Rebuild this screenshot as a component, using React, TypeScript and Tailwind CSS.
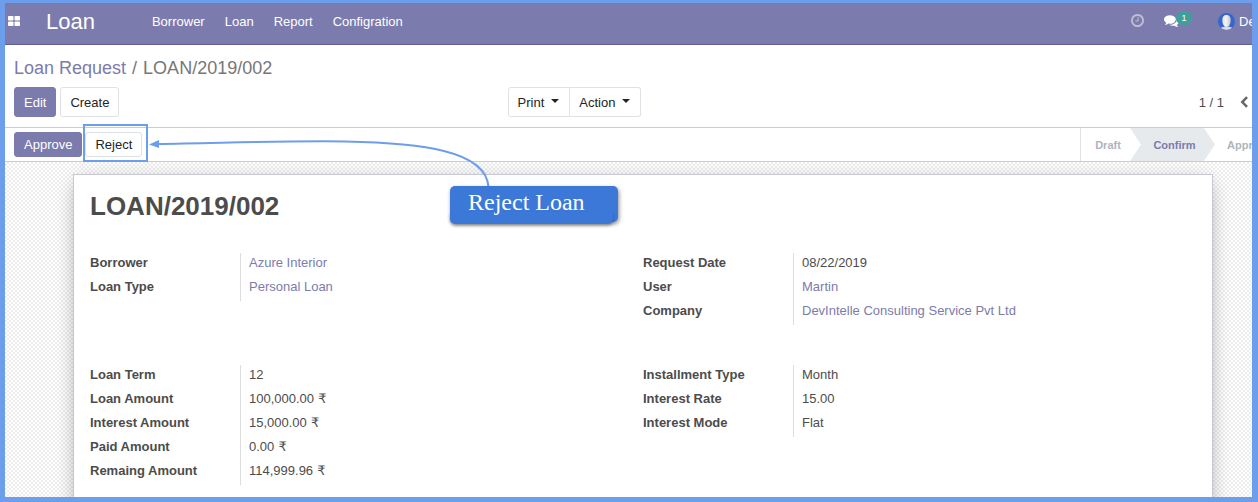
import React from "react";

type Field = { label: string; value: string; link?: boolean; currency?: boolean };

const partyFields: Field[] = [
  { label: "Borrower", value: "Azure Interior", link: true },
  { label: "Loan Type", value: "Personal Loan", link: true },
];
const requestFields: Field[] = [
  { label: "Request Date", value: "08/22/2019" },
  { label: "User", value: "Martin", link: true },
  { label: "Company", value: "DevIntelle Consulting Service Pvt Ltd", link: true },
];
const amountFields: Field[] = [
  { label: "Loan Term", value: "12" },
  { label: "Loan Amount", value: "100,000.00", currency: true },
  { label: "Interest Amount", value: "15,000.00", currency: true },
  { label: "Paid Amount", value: "0.00", currency: true },
  { label: "Remaing Amount", value: "114,999.96", currency: true },
];
const interestFields: Field[] = [
  { label: "Installment Type", value: "Month" },
  { label: "Interest Rate", value: "15.00" },
  { label: "Interest Mode", value: "Flat" },
];

function FieldGroup({ fields }: { fields: Field[] }) {
  return (
    <dl>
      {fields.map((f) => (
        <div key={f.label} className="flex h-6 leading-5">
          <dt className="w-[150px] shrink-0 font-bold">{f.label}</dt>
          <dd className="border-l border-[#dddddd] pl-2">
            {f.link ? (
              <a href="#" className="text-[#7c7bad]">{f.value}</a>
            ) : (
              f.value
            )}
            {f.currency && <span className="font-['DejaVu_Sans',sans-serif] leading-none"> ₹</span>}
          </dd>
        </div>
      ))}
    </dl>
  );
}

function AppsIcon() {
  return (
    <svg viewBox="0 0 12 10" className="mb-[2px] h-[10px] w-3" fill="currentColor" aria-hidden="true">
      <rect x="0" y="0" width="5.5" height="4.6" rx="0.8" />
      <rect x="6.5" y="0" width="5.5" height="4.6" rx="0.8" />
      <rect x="0" y="5.4" width="5.5" height="4.6" rx="0.8" />
      <rect x="6.5" y="5.4" width="5.5" height="4.6" rx="0.8" />
    </svg>
  );
}

function ClockIcon() {
  return (
    <svg viewBox="0 128 1536 1536" className="h-[13px] w-[13px]" fill="currentColor" aria-hidden="true">
      <path d="M896 544v448q0 14-9 23t-23 9h-320q-14 0-23-9t-9-23v-64q0-14 9-23t23-9h224v-352q0-14 9-23t23-9h64q14 0 23 9t9 23zm416 352q0-148-73-273t-198-198-273-73-273 73-198 198-73 273 73 273 198 198 273 73 273-73 198-198 73-273zm224 0q0 209-103 385.500t-279.500 279.500-385.500 103-385.500-103-279.500-279.500-103-385.500 103-385.500 279.500-279.500 385.500-103 385.500 103 279.500 279.500 103 385.500z" />
    </svg>
  );
}

function CommentsIcon() {
  return (
    <svg viewBox="0 0 1792 1792" className="h-[15px] w-[15px]" fill="currentColor" aria-hidden="true">
      <path d="M1408 768q0 139-94 257t-256.500 186.500-353.500 68.500q-86 0-176-16-124 88-278 128-36 9-86 16h-3q-11 0-20.500-8t-11.500-21q-1-3-1-6.500t.5-6.500 2-6l2.500-5 3.500-5.500 4-5 4.500-5 4-4.500q5-6 23-25t26-29.500 22.500-29 25-38.500 20.500-44q-124-72-195-177t-71-224q0-139 94-257t256.500-186.500 353.500-68.500 353.500 68.500 256.500 186.500 94 257zm384 256q0 120-71 224.500t-195 176.500q10 24 20.500 44t25 38.500 22.500 29 26 29.500 23 25q1 1 4 4.500t4.500 5 4 5 3.500 5.500l2.500 5 2 6 .5 6.500-1 6.500q-3 14-13 22t-22 7q-50-7-86-16-154-40-278-128-90 16-176 16-271 0-472-132 58 4 88 4 161 0 309-45t264-129q125-92 192-212t67-254q0-77-23-152 129 71 204 178t75 230z" />
    </svg>
  );
}

function Avatar() {
  return (
    <svg viewBox="0 0 17 17" className="h-[17px] w-[17px] shrink-0" aria-hidden="true">
      <defs>
        <linearGradient id="face" x1="0" x2="1" y1="0" y2="0">
          <stop offset="0" stopColor="#e2e2e2" />
          <stop offset="0.45" stopColor="#f3f3f3" />
          <stop offset="1" stopColor="#c3c5c9" />
        </linearGradient>
        <clipPath id="disc">
          <circle cx="8.500" cy="8.500" r="8.500" />
        </clipPath>
      </defs>
      <g clipPath="url(#disc)">
        <rect width="17" height="17" fill="#3566cc" />
        <path d="M2 17c0-2.500 2-3 4.500-3.200h4C13 14 15 14.500 15 17z" fill="#d8dbdf" />
        <path d="M8.500 2C11.500 2 12.700 4 12.700 7c0 3.500-1.400 7-4.200 7S4.300 10.500 4.300 7c0-3 1.200-5 4.200-5z" fill="url(#face)" />
      </g>
    </svg>
  );
}

function Caret() {
  return (
    <svg viewBox="0 0 8 4" className="mb-1 h-1 w-2" fill="currentColor" aria-hidden="true">
      <path d="M0 0h8L4 4z" />
    </svg>
  );
}

function ChevronLeft() {
  return (
    <svg viewBox="320 0 1152 1664" className="h-[12px] w-2" fill="currentColor" aria-hidden="true">
      <path d="M1427 301l-531 531 531 531q19 19 19 45t-19 45l-166 166q-19 19-45 19t-45-19l-742-742q-19-19-19-45t19-45l742-742q19-19 45-19t45 19l166 166q19 19 19 45t-19 45z" />
    </svg>
  );
}

export default function App() {
  return (
    <div className="flex h-screen flex-col overflow-hidden border-t-3 border-r-6 border-b-5 border-l-5 border-[#6d9eeb] bg-white font-['Liberation_Sans',Arial,sans-serif] text-[13px] text-[#4c4c4c]">
      <header className="flex h-[42px] shrink-0 items-center border-b border-[#5f5e97] bg-[#7c7bad] pb-1 text-white">
        <button type="button" aria-label="Applications" className="ml-[3px]">
          <AppsIcon />
        </button>
        <a href="#" className="ml-[26px] text-[22px] leading-8">Loan</a>
        <nav className="ml-[57px] flex gap-5">
          <a href="#">Borrower</a>
          <a href="#">Loan</a>
          <a href="#">Report</a>
          <a href="#">Configration</a>
        </nav>
        <div className="ml-auto flex items-center">
          <button type="button" aria-label="Activities" className="pb-[2px] text-[#bdbdd6]">
            <ClockIcon />
          </button>
          <button type="button" aria-label="Messages" className="relative ml-5 pb-[2px]">
            <CommentsIcon />
            <span className="absolute -top-[2px] left-3 flex h-[14px] w-4 items-center justify-center rounded-full bg-[#3f9f9b] text-[9px] leading-none">
              1
            </span>
          </button>
          <button type="button" className="ml-[39px] flex w-[34px] items-center gap-1 overflow-hidden">
            <Avatar />
            <span>De</span>
          </button>
        </div>
      </header>

      <section className="shrink-0 border-b border-[#cccccc] pt-[11px] pr-1 pb-[10px] pl-[9px]">
        <div className="text-[18px] leading-6 text-[#777777]">
          <a href="#" className="text-[#7c7bad]">Loan Request</a>
          <span className="px-[6px]">/</span>
          <span>LOAN/2019/002</span>
        </div>
        <div className="mt-[7px] grid grid-cols-[2fr_3fr] items-center">
          <div className="flex gap-1">
            <button type="button" className="h-[30px] rounded-[3px] border border-[#7c7bad] bg-[#7c7bad] px-[9px] pt-[2px] text-white">
              Edit
            </button>
            <button type="button" className="h-[30px] rounded-[3px] border border-[#dee2e6] bg-white px-[9px] pt-[2px] text-[#212529]">
              Create
            </button>
          </div>
          <div className="flex items-center justify-between">
            <div className="flex text-[#212529]">
              <button type="button" className="flex h-[30px] items-center gap-[7px] rounded-l-[3px] border border-[#dee2e6] pt-[2px] pr-[10px] pl-[9px]">
                Print <Caret />
              </button>
              <button type="button" className="flex h-[30px] items-center gap-[7px] rounded-r-[3px] border border-l-0 border-[#dee2e6] pt-[2px] pr-[10px] pl-[9px]">
                Action <Caret />
              </button>
            </div>
            <div className="flex items-center gap-4 pt-[2px]">
              <span>1 / 1</span>
              <button type="button" aria-label="Previous" className="pb-[2px] text-[#666666]">
                <ChevronLeft />
              </button>
            </div>
          </div>
        </div>
      </section>

      <section className="relative z-10 flex h-[34px] shrink-0 justify-between border-b border-[#cccccc] bg-white pl-[9px]">
        <div className="flex items-center gap-[3px]">
          <button type="button" className="h-[25px] rounded-[3px] border border-[#7c7bad] bg-[#7c7bad] px-[9px] text-white">
            Approve
          </button>
          <button type="button" className="h-[25px] rounded-[3px] border border-[#dee2e6] bg-white px-[9px] text-[#212529]">
            Reject
          </button>
        </div>
        <div className="flex overflow-hidden border-l border-[#dee2e6] text-[11px] font-bold text-[#adb5bd]">
          <button type="button" className="w-[49px] pt-[2px] pl-[5px]">Draft</button>
          <button
            type="button"
            aria-current="step"
            className="w-[85px] bg-[#e7eaed] pt-[2px] pl-1 text-[#7c7bad] [clip-path:polygon(0_0,74px_0,100%_50%,74px_100%,0_100%,11px_50%)]"
          >
            Confirm
          </button>
          <button type="button" className="w-[37px] overflow-hidden pt-[2px] pl-3 text-left">Approve</button>
        </div>

        {/* Callout pointing at the Reject button */}
        <div className="pointer-events-none absolute -top-1 left-[78px] h-[38px] w-[65px] border-2 border-[#6d9eeb]" />
        <svg viewBox="144 128 350 60" className="pointer-events-none absolute top-0 left-[139px] h-[60px] w-[350px]" aria-hidden="true">
          <path d="M157 144C225 143 290 140.500 345 141.500C420 143 486 150 488.500 187" fill="none" stroke="#6d9eeb" strokeWidth="2" />
          <path d="M149 144.500L159 140v8z" fill="#6d9eeb" />
        </svg>
        <div className="absolute top-[58px] left-[445px] rounded-[5px] bg-[#3c78d8] pr-[33px] pb-1 pl-[18px] font-['Liberation_Serif',serif] text-2xl leading-8 whitespace-nowrap text-white shadow-[1px_2px_4px_rgba(0,0,0,0.45)]">
          <div className="absolute right-[5px] -bottom-[2px] left-0 h-3 rounded-b-[5px] bg-[#3c78d8] shadow-[0_2px_3px_rgba(0,0,0,0.3)]" />
          <span className="relative">Reject Loan</span>
        </div>
      </section>

      <main className="flex min-h-0 flex-1 bg-[repeating-conic-gradient(#ededed_0_25%,#ffffff_0_50%)] bg-[size:4px_4px] pt-3 pr-[39px] pl-[68px]">
        <article className="h-[600px] flex-1 border border-[#c8c8d3] bg-white px-4 pt-[15px] shadow-[0_5px_20px_-5px_rgba(0,0,0,0.4)]">
          <h1 className="text-[26px] leading-8 font-bold">LOAN/2019/002</h1>
          <div className="mt-[31px] grid grid-cols-2 items-start gap-y-10">
            <FieldGroup fields={partyFields} />
            <FieldGroup fields={requestFields} />
            <FieldGroup fields={amountFields} />
            <FieldGroup fields={interestFields} />
          </div>
        </article>
      </main>
    </div>
  );
}
